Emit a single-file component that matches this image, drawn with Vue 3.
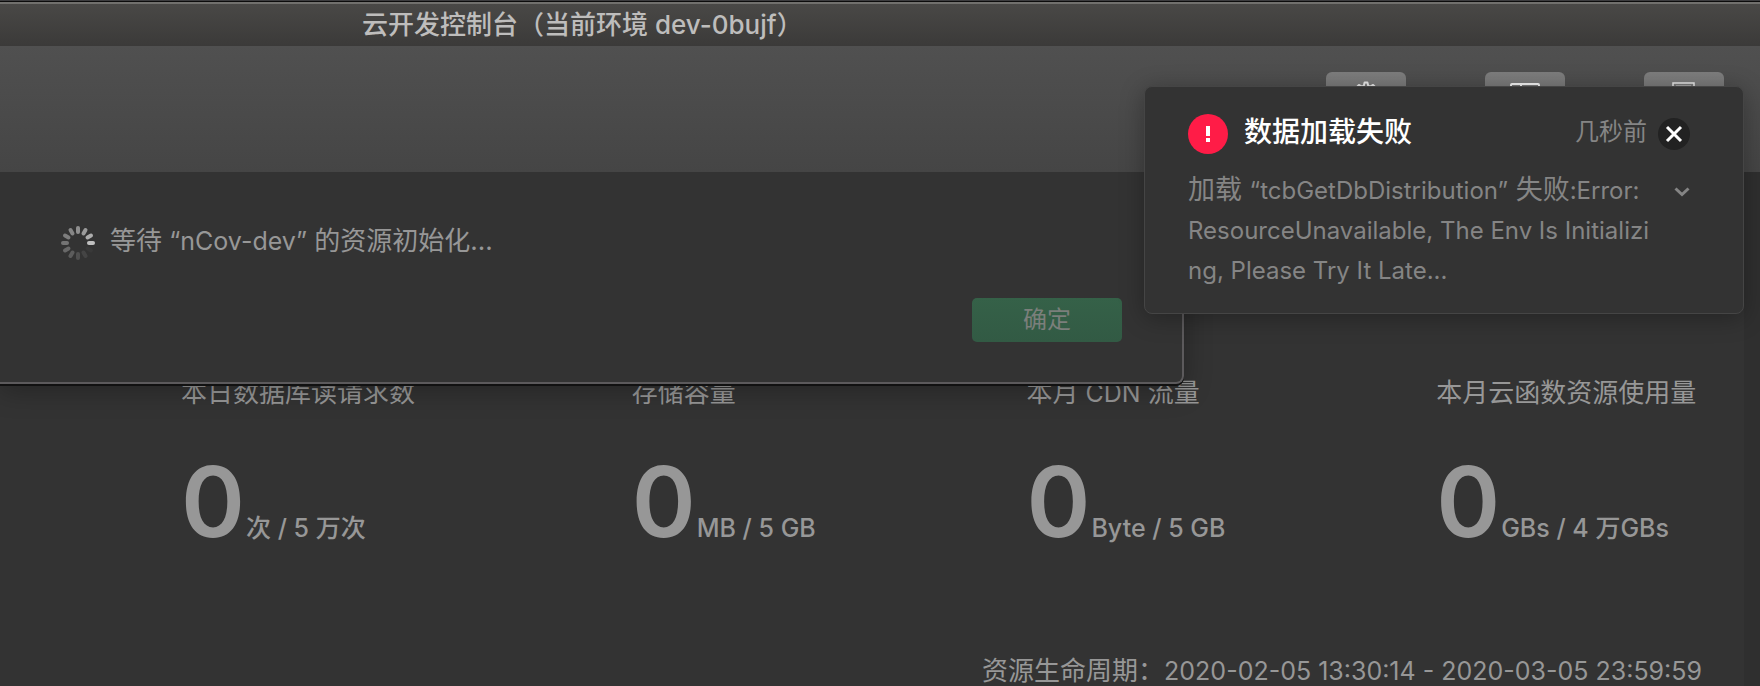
<script setup>
const petals = Array.from({ length: 12 }, (_, i) => ({
  angle: i * 30,
  opacity: [0.95, 0.04, 0.12, 0.2, 0.28, 0.36, 0.44, 0.5, 0.56, 0.62, 0.7, 0.82][i],
}))

const gearPath = (() => {
  const points = []
  for (let tooth = 0; tooth < 8; tooth++) {
    for (const [offset, radius] of [[-15, 8.5], [-7, 11.5], [7, 11.5], [15, 8.5]]) {
      const a = ((tooth * 45 + offset) * Math.PI) / 180
      points.push(`${(16 + radius * Math.sin(a)).toFixed(2)} ${(15 - radius * Math.cos(a)).toFixed(2)}`)
    }
  }
  return `M${points.join('L')}Z`
})()

const stats = [
  { label: ['本日数据库读请求数'], value: '0', unit: '次 / 5 万次' },
  { label: ['存储容量'], value: '0', unit: 'MB / 5 GB' },
  { label: ['本月', ' CDN ', '流量'], value: '0', unit: 'Byte / 5 GB' },
  { label: ['本月云函数资源使用量'], value: '0', unit: 'GBs / 4 万GBs' },
]
</script>

<template>
  <div class="console">
    <header class="titlebar">
      <h1>云开发控制台（当前环境 dev-0bujf）</h1>
    </header>

    <nav class="toolbar">
      <button type="button" class="tool" aria-label="设置">
        <svg width="32" height="32" viewBox="0 0 32 32" fill="none" stroke="#e8e8e8" stroke-width="2" stroke-linejoin="round">
          <path :d="gearPath" />
          <circle cx="16" cy="15" r="4" />
        </svg>
      </button>
      <button type="button" class="tool" aria-label="布局">
        <svg width="32" height="32" viewBox="0 0 32 32" fill="none" stroke="#f2f2f2" stroke-width="2">
          <rect x="2" y="5" width="28" height="22" rx="1" />
          <path d="M12 5v22" />
        </svg>
      </button>
      <button type="button" class="tool" aria-label="文档">
        <svg width="32" height="32" viewBox="0 0 32 32" fill="none" stroke="#e8e8e8" stroke-width="1.500">
          <path d="M5 4h21v24H5z" />
          <path d="M8 7h15" stroke="#b0b0b0" />
        </svg>
      </button>
    </nav>

    <main class="content">
      <section class="panel">
        <div class="stats">
          <article v-for="s in stats" :key="s.unit" class="stat">
            <h2><span v-for="(part, i) in s.label" :key="i" :class="{ latin: i === 1 }">{{ part }}</span></h2>
            <p><strong>{{ s.value }}</strong><span>{{ s.unit }}</span></p>
          </article>
        </div>
        <p class="period">资源生命周期：<span class="latin">2020-02-05 13:30:14 - 2020-03-05 23:59:59</span></p>
      </section>

      <section class="sheet" role="dialog" aria-label="资源初始化">
        <div class="waiting">
          <svg class="spinner" width="34" height="34" viewBox="0 0 34 34">
            <rect
              v-for="p in petals"
              :key="p.angle"
              x="26" y="15" width="8" height="4" rx="2"
              fill="#c8c8c8"
              :opacity="p.opacity"
              :transform="`rotate(${p.angle} 17 17)`"
            />
          </svg>
          <span>等待 <span class="latin">“nCov-dev”</span> 的资源初始化...</span>
        </div>
        <div class="actions">
          <button type="button" class="confirm" disabled>确定</button>
        </div>
      </section>
    </main>

    <aside class="toast" role="alert">
      <div class="toast-head">
        <svg class="badge" width="40" height="40" viewBox="0 0 40 40">
          <circle cx="20" cy="20" r="20" fill="#ff1c47" />
          <path d="M18 12h4v10h-4zM18 24h4v4h-4z" fill="#fff" />
        </svg>
        <h2>数据加载失败</h2>
        <time>几秒前</time>
        <button type="button" class="close" aria-label="关闭">
          <svg width="32" height="32" viewBox="0 0 32 32">
            <circle cx="16" cy="16" r="16" fill="#222" />
            <path d="M9 9l14 14M23 9L9 23" stroke="#fff" stroke-width="3" />
          </svg>
        </button>
      </div>
      <div class="toast-body">
        <p><span class="han">加载 </span>“tcbGetDbDistribution”<span class="han"> 失败</span>:Error:<br />ResourceUnavailable, The Env Is Initializi<br />ng, Please Try It Late...</p>
        <button type="button" class="expand" aria-label="展开">
          <svg width="16" height="10" viewBox="0 0 16 10" fill="none" stroke="#858585" stroke-width="3">
            <path d="M1.500 1.500L8 7.500l6.500-6" />
          </svg>
        </button>
      </div>
    </aside>
  </div>
</template>

<style>
html,
body {
  background: #333;
}
</style>

<style scoped>
.console {
  position: relative;
  box-sizing: border-box;
  height: 100vh;
  display: flex;
  flex-direction: column;
  overflow: hidden;
  background: #333;
  color: #979797;
  font-family: Inter, "Noto Sans CJK SC", sans-serif;
  font-size: 26px;
}
h1,
h2,
p {
  margin: 0;
  font-size: inherit;
  font-weight: 400;
}
button {
  padding: 0;
  border: 0;
  font: inherit;
  background: none;
}
svg {
  display: block;
}
.latin {
  font-size: 25px;
  line-height: 1;
  white-space: pre;
}
.titlebar {
  box-sizing: border-box;
  height: 46px;
  flex: none;
  border-top: 1px solid #3c3c3e;
  box-shadow: inset 0 1px #0c0c0c, inset 0 3px #71706d;
  background: linear-gradient(#4a4947, #3b3a39);
  padding-left: 362px;
  color: #bebdbc;
  line-height: 48px;
}
.titlebar h1 {
  white-space: nowrap;
  font-weight: 500;
}
.toolbar {
  box-sizing: border-box;
  height: 126px;
  flex: none;
  display: flex;
  justify-content: flex-end;
  gap: 79px;
  padding: 26px 36px 0 0;
  background: linear-gradient(#505050, #454545);
}
.tool {
  width: 80px;
  height: 46px;
  border-radius: 6px;
  display: flex;
  justify-content: center;
  padding-top: 7px;
  background: linear-gradient(#7d7d7d, #707070);
}
.content {
  position: relative;
  flex: 1;
  min-height: 0;
  display: flex;
  overflow: hidden;
  background: #2f2f2f;
}
.panel {
  flex: 1;
  margin-right: 16px;
  padding: 200px 42px 0 181px;
  background: #333;
}
.stats {
  display: grid;
  grid-template-columns: 451fr 395fr 410fr 266fr;
}
.stat {
  min-width: 0;
}
.stat h2 {
  line-height: 42px;
  white-space: nowrap;
}
.stat p {
  display: flex;
  align-items: baseline;
  gap: 1px;
  margin-top: 28px;
  line-height: 40px;
  white-space: nowrap;
}
.stat strong {
  font-size: 97px;
  font-weight: 600;
  line-height: 120px;
}
.stat p span {
  font-size: 25px;
  font-weight: 500;
}
.period {
  margin-top: 93px;
  line-height: 32px;
  text-align: right;
  white-space: nowrap;
}
.sheet {
  position: absolute;
  top: 0;
  left: 0;
  box-sizing: border-box;
  width: 1184px;
  height: 212px;
  padding: 49px 60px 0 61px;
  border: solid #5c5a5c;
  border-width: 0 2px 2px 0;
  border-radius: 0 0 8px 0;
  background: #333;
  box-shadow: 0 2px #111, 0 6px 28px rgba(0, 0, 0, 0.3);
}
.waiting {
  display: flex;
  align-items: center;
  gap: 15px;
  height: 40px;
  line-height: 40px;
}
.spinner {
  margin-top: 4px;
}
.actions {
  display: flex;
  justify-content: flex-end;
  margin-top: 37px;
}
.confirm {
  width: 150px;
  height: 44px;
  border-radius: 5px;
  background: linear-gradient(#356148, #325a44);
  color: #7b7f7b;
  font-size: 24px;
  line-height: 40px;
}
.toast {
  position: absolute;
  top: 86px;
  right: 16px;
  box-sizing: border-box;
  width: 600px;
  padding: 27px 53px 22px 43px;
  border: 1px solid #454545;
  border-radius: 8px;
  background: #333;
  color: #858585;
  box-shadow: 0 4px 24px rgba(0, 0, 0, 0.3);
}
.toast-head {
  display: flex;
  align-items: center;
  height: 40px;
  line-height: 36px;
}
.toast-head h2 {
  flex: 1;
  align-self: flex-start;
  margin-left: 16px;
  color: #fff;
  font-size: 28px;
  font-weight: 500;
}
.toast-head time {
  align-self: flex-start;
  font-size: 24px;
}
.close {
  margin-left: 11px;
}
.toast-body {
  display: flex;
  justify-content: space-between;
  align-items: flex-start;
  margin-top: 17px;
  line-height: 40px;
}
.toast-body p {
  font-size: 24px;
  white-space: nowrap;
}
.han {
  font-size: 27px;
  line-height: 1;
}
.expand {
  margin-top: 16px;
}
</style>
